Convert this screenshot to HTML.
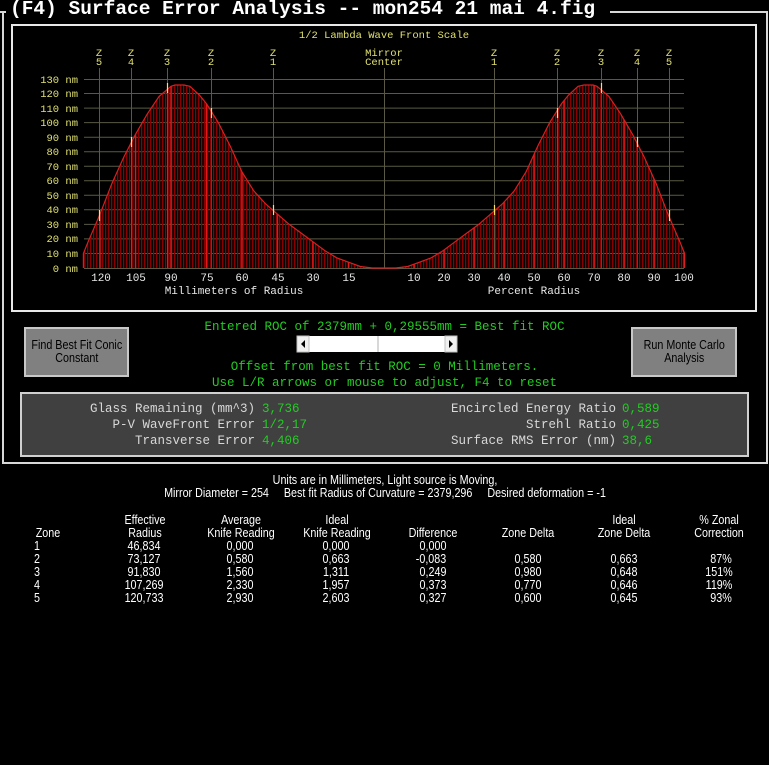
<!DOCTYPE html>
<html><head><meta charset="utf-8"><style>
body{margin:0;background:#000;width:769px;height:765px;overflow:hidden;position:relative;font-family:"Liberation Mono",monospace}
.a{position:absolute;white-space:nowrap}
.g{color:#22cc22;font-size:12.5px}
.btn{position:absolute;background:#808080;border:2px solid #c8c8c8;box-sizing:border-box;color:#000;font-family:"Liberation Sans",sans-serif;font-size:12.5px;text-align:center;line-height:13px;display:flex;align-items:center;justify-content:center}
.btn span{display:inline-block;transform:scaleX(0.86);white-space:nowrap}
.st{position:absolute;color:#d8d8d8;font-size:12.5px;white-space:nowrap}
.st b{font-weight:normal;color:#22cc22}
.t{position:absolute;color:#fff;font-family:"Liberation Sans",sans-serif;font-size:12.5px;white-space:nowrap;transform:translateX(-50%) scaleX(0.86)}
</style></head><body>
<svg width="769" height="765" style="position:absolute;left:0;top:0">
<defs>
<pattern id="hp" width="3" height="10" patternUnits="userSpaceOnUse"><rect x="0" y="0" width="1.3" height="10" fill="#8a0000"/></pattern>
<clipPath id="cp"><polygon points="83.4,268 83.4,253.5 88.1,241.8 100,214.2 111.8,183.7 123.6,157.5 135.5,134.3 147.3,113.9 159.1,96.4 171,86.3 175,85 184,85 189.9,86.3 199.4,95 206.5,103.7 218.3,122.6 230.1,145.9 242,172 253.8,190.9 265.7,204 277.5,214.2 289.3,224.4 301.2,233.1 313,241.8 324.8,250.6 336.7,257.8 348.5,262.2 360.3,266.5 372.2,268 384,268 395.8,268 407.7,266.5 419.5,262.2 431.3,257.8 443.2,250.6 455,241.8 466.8,233.1 478.7,224.4 490.5,214.2 502.3,204 514.2,190.9 526,172 537.9,145.9 549.7,122.6 561.5,103.7 568.6,95 578.1,86.3 584,85 593,85 597,86.3 608.9,96.4 620.7,113.9 632.5,134.3 644.4,157.5 656.2,183.7 668,214.2 679.9,241.8 684.6,253.5 684.6,268"/></clipPath>
</defs>
<g stroke="#d8d8d8" stroke-width="2" fill="none">
<path d="M0,12 H6"/><path d="M610,12 H767 V463 H3 V12"/>
</g>
<rect x="12" y="25" width="744" height="286" fill="none" stroke="#e8e8e8" stroke-width="2"/>
<g stroke="#5a5a44" stroke-width="1">
<path d="M84,268.5H684M84,253.5H684M84,238.9H684M84,224.4H684M84,209.8H684M84,195.3H684M84,180.8H684M84,166.2H684M84,151.7H684M84,137.2H684M84,122.6H684M84,108.1H684M84,93.5H684M84,79.5H684"/>
<path d="M99.5,68V268M131.5,68V268M167.5,68V268M211.5,68V268M273.5,68V268M384.5,68V268M494.5,68V268M557.5,68V268M601.5,68V268M637.5,68V268M669.5,68V268"/>
</g>
<g clip-path="url(#cp)">
<rect x="83" y="80" width="603" height="189" fill="url(#hp)"/>
<path stroke="#e01818" stroke-width="1.5" d="M100,80V268M135.5,80V268M171,80V268M206.5,80V268M242,80V268M277.5,80V268M313,80V268M348.5,80V268M414,80V268M444,80V268M474,80V268M504,80V268M534,80V268M564,80V268M594,80V268M624,80V268M654,80V268M684,80V268"/>
</g>
<polyline fill="none" stroke="#d82020" stroke-width="1.2" points="83.4,268 83.4,253.5 88.1,241.8 100,214.2 111.8,183.7 123.6,157.5 135.5,134.3 147.3,113.9 159.1,96.4 171,86.3 175,85 184,85 189.9,86.3 199.4,95 206.5,103.7 218.3,122.6 230.1,145.9 242,172 253.8,190.9 265.7,204 277.5,214.2 289.3,224.4 301.2,233.1 313,241.8 324.8,250.6 336.7,257.8 348.5,262.2 360.3,266.5 372.2,268 384,268 395.8,268 407.7,266.5 419.5,262.2 431.3,257.8 443.2,250.6 455,241.8 466.8,233.1 478.7,224.4 490.5,214.2 502.3,204 514.2,190.9 526,172 537.9,145.9 549.7,122.6 561.5,103.7 568.6,95 578.1,86.3 584,85 593,85 597,86.3 608.9,96.4 620.7,113.9 632.5,134.3 644.4,157.5 656.2,183.7 668,214.2 679.9,241.8 684.6,253.5 684.6,268"/>
<g stroke="#ffe060" stroke-width="1.2">
<path d="M99.5,210V221M131.5,137V147M167.5,83V93M211.5,108V118M273.5,205V215M494.5,205V215M557.5,108V118M601.5,83V93M637.5,137V147M669.5,210V221"/>
</g>
<g font-family="Liberation Mono, monospace" font-size="10.5" fill="#e0e070" text-anchor="middle">
<text x="384" y="38">1/2 Lambda Wave Front Scale</text>
<text x="99" y="56">Z</text><text x="99" y="65">5</text>
<text x="131" y="56">Z</text><text x="131" y="65">4</text>
<text x="167" y="56">Z</text><text x="167" y="65">3</text>
<text x="211" y="56">Z</text><text x="211" y="65">2</text>
<text x="273" y="56">Z</text><text x="273" y="65">1</text>
<text x="384" y="56">Mirror</text><text x="384" y="65">Center</text>
<text x="494" y="56">Z</text><text x="494" y="65">1</text>
<text x="557" y="56">Z</text><text x="557" y="65">2</text>
<text x="601" y="56">Z</text><text x="601" y="65">3</text>
<text x="637" y="56">Z</text><text x="637" y="65">4</text>
<text x="669" y="56">Z</text><text x="669" y="65">5</text>
</g>
<g font-family="Liberation Mono, monospace" font-size="10.5" fill="#e0e070" text-anchor="end">
<text x="78" y="83">130 nm</text><text x="78" y="97">120 nm</text><text x="78" y="112">110 nm</text><text x="78" y="126">100 nm</text><text x="78" y="141">90 nm</text><text x="78" y="155">80 nm</text><text x="78" y="170">70 nm</text><text x="78" y="184">60 nm</text><text x="78" y="199">50 nm</text><text x="78" y="213">40 nm</text><text x="78" y="228">30 nm</text><text x="78" y="242">20 nm</text><text x="78" y="257">10 nm</text><text x="78" y="272">0 nm</text>
</g>
<g font-family="Liberation Mono, monospace" font-size="11" fill="#e8e8e8" text-anchor="middle">
<text x="101" y="281">120</text><text x="136" y="281">105</text><text x="171" y="281">90</text><text x="207" y="281">75</text><text x="242" y="281">60</text><text x="278" y="281">45</text><text x="313" y="281">30</text><text x="349" y="281">15</text>
<text x="414" y="281">10</text><text x="444" y="281">20</text><text x="474" y="281">30</text><text x="504" y="281">40</text><text x="534" y="281">50</text><text x="564" y="281">60</text><text x="594" y="281">70</text><text x="624" y="281">80</text><text x="654" y="281">90</text><text x="684" y="281">100</text>
<text x="234" y="294">Millimeters of Radius</text><text x="534" y="294">Percent Radius</text>
</g>
<rect x="297" y="336" width="160" height="16" fill="#fff"/>
<rect x="297" y="336" width="12" height="16" fill="#f0f0f0" stroke="#c0c0c0"/>
<rect x="445" y="336" width="12" height="16" fill="#f0f0f0" stroke="#c0c0c0"/>
<path d="M305,340L301,344L305,348Z M449,340L453,344L449,348Z" fill="#000"/>
<line x1="378" y1="336" x2="378" y2="352" stroke="#b0b0b0"/>
<rect x="21" y="393" width="727" height="63" fill="#404040" stroke="#d0d0d0" stroke-width="2"/>
</svg>
<div class="a" style="left:10px;top:-2px;color:#fff;font-weight:bold;font-size:19.5px">(F4) Surface Error Analysis -- mon254 21 mai 4.fig</div>
<div class="btn" style="left:24px;top:327px;width:105px;height:50px"><span>Find Best Fit Conic<br>Constant</span></div>
<div class="btn" style="left:631px;top:327px;width:106px;height:50px"><span>Run Monte Carlo<br>Analysis</span></div>
<div class="a g" style="left:0;width:769px;text-align:center;top:320px">Entered ROC of 2379mm + 0,29555mm = Best fit ROC</div>
<div class="a g" style="left:0;width:769px;text-align:center;top:360px">Offset from best fit ROC = 0 Millimeters.</div>
<div class="a g" style="left:0;width:769px;text-align:center;top:376px">Use L/R arrows or mouse to adjust, F4 to reset</div>
<div class="st" style="right:514px;top:402px;text-align:right">Glass Remaining (mm^3)</div><div class="st" style="left:262px;top:402px"><b>3,736</b></div>
<div class="st" style="right:514px;top:418px">P-V WaveFront Error</div><div class="st" style="left:262px;top:418px"><b>1/2,17</b></div>
<div class="st" style="right:514px;top:434px">Transverse Error</div><div class="st" style="left:262px;top:434px"><b>4,406</b></div>
<div class="st" style="right:153px;top:402px">Encircled Energy Ratio</div><div class="st" style="left:622px;top:402px"><b>0,589</b></div>
<div class="st" style="right:153px;top:418px">Strehl Ratio</div><div class="st" style="left:622px;top:418px"><b>0,425</b></div>
<div class="st" style="right:153px;top:434px">Surface RMS Error (nm)</div><div class="st" style="left:622px;top:434px"><b>38,6</b></div>

<div class="t" style="left:385px;top:473px">Units are in Millimeters, Light source is Moving,</div>
<div class="t" style="left:385px;top:486px">Mirror Diameter = 254 &nbsp;&nbsp;&nbsp;&nbsp;Best fit Radius of Curvature = 2379,296 &nbsp;&nbsp;&nbsp;&nbsp;Desired deformation = -1</div>

<div class="t" style="left:145px;top:513px">Effective</div><div class="t" style="left:241px;top:513px">Average</div><div class="t" style="left:337px;top:513px">Ideal</div><div class="t" style="left:624px;top:513px">Ideal</div><div class="t" style="left:719px;top:513px">% Zonal</div>
<div class="t" style="left:48px;top:526px">Zone</div><div class="t" style="left:145px;top:526px">Radius</div><div class="t" style="left:241px;top:526px">Knife Reading</div><div class="t" style="left:337px;top:526px">Knife Reading</div><div class="t" style="left:433px;top:526px">Difference</div><div class="t" style="left:528px;top:526px">Zone Delta</div><div class="t" style="left:624px;top:526px">Zone Delta</div><div class="t" style="left:719px;top:526px">Correction</div>

<div class="t" style="left:37px;top:539px">1</div><div class="t" style="left:144px;top:539px">46,834</div><div class="t" style="left:240px;top:539px">0,000</div><div class="t" style="left:336px;top:539px">0,000</div><div class="t" style="left:433px;top:539px">0,000</div>
<div class="t" style="left:37px;top:552px">2</div><div class="t" style="left:144px;top:552px">73,127</div><div class="t" style="left:240px;top:552px">0,580</div><div class="t" style="left:336px;top:552px">0,663</div><div class="t" style="left:431px;top:552px">-0,083</div><div class="t" style="left:528px;top:552px">0,580</div><div class="t" style="left:624px;top:552px">0,663</div><div class="t" style="left:721px;top:552px">87%</div>
<div class="t" style="left:37px;top:565px">3</div><div class="t" style="left:144px;top:565px">91,830</div><div class="t" style="left:240px;top:565px">1,560</div><div class="t" style="left:336px;top:565px">1,311</div><div class="t" style="left:433px;top:565px">0,249</div><div class="t" style="left:528px;top:565px">0,980</div><div class="t" style="left:624px;top:565px">0,648</div><div class="t" style="left:719px;top:565px">151%</div>
<div class="t" style="left:37px;top:578px">4</div><div class="t" style="left:144px;top:578px">107,269</div><div class="t" style="left:240px;top:578px">2,330</div><div class="t" style="left:336px;top:578px">1,957</div><div class="t" style="left:433px;top:578px">0,373</div><div class="t" style="left:528px;top:578px">0,770</div><div class="t" style="left:624px;top:578px">0,646</div><div class="t" style="left:719px;top:578px">119%</div>
<div class="t" style="left:37px;top:591px">5</div><div class="t" style="left:144px;top:591px">120,733</div><div class="t" style="left:240px;top:591px">2,930</div><div class="t" style="left:336px;top:591px">2,603</div><div class="t" style="left:433px;top:591px">0,327</div><div class="t" style="left:528px;top:591px">0,600</div><div class="t" style="left:624px;top:591px">0,645</div><div class="t" style="left:721px;top:591px">93%</div>
</body></html>
